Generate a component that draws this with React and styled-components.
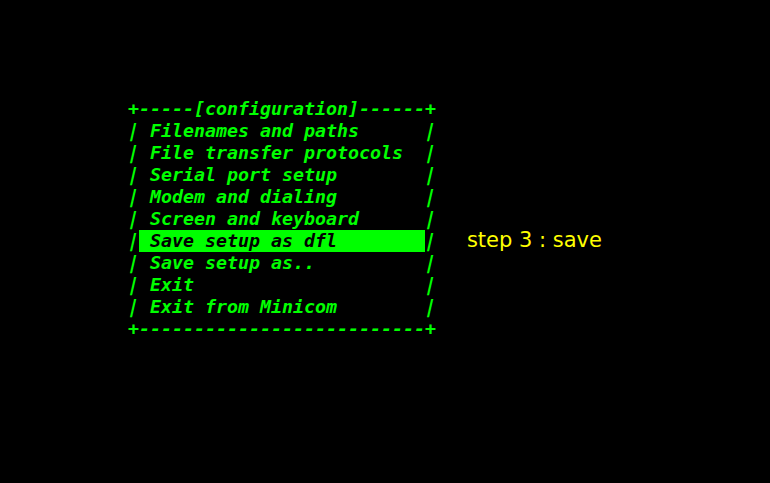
import React from 'react';
import styled, { createGlobalStyle } from 'styled-components';

const Global = createGlobalStyle`
  html, body {
    margin: 0;
    padding: 0;
    background: #000;
  }
  body {
    width: 770px;
    height: 483px;
    overflow: hidden;
  }
`;

const Screen = styled.div`
  width: 770px;
  height: 483px;
  background: #000;
  box-sizing: border-box;
  padding: 98px 0 0 128px;
  display: flex;
  align-items: flex-start;
`;

const Menu = styled.div`
  display: flex;
  flex-direction: column;
  font-family: "DejaVu Sans Mono", "Liberation Mono", monospace;
  font-weight: bold;
  font-style: oblique;
  font-size: 18.27px;
  color: #00ff00;
`;

const Line = styled.div`
  height: 22px;
  line-height: 22px;
  white-space: pre;
  display: flex;
`;

// the border bar leans like the rest of the oblique text
const Bar = styled.span`
  display: inline-block;
  transform: skewX(-13deg);
`;

const Cell = styled.span`
  background: ${p => (p.$active ? '#00ff00' : 'transparent')};
  color: ${p => (p.$active ? '#000' : '#00ff00')};
  white-space: pre;
`;

const Note = styled.div`
  margin: 131px 0 0 31px;
  height: 22px;
  line-height: 22px;
  font-family: "DejaVu Sans", "Liberation Sans", sans-serif;
  font-size: 21px;
  color: #ffff00;
  white-space: pre;
`;

const WIDTH = 26;

const items = [
  'Filenames and paths',
  'File transfer protocols',
  'Serial port setup',
  'Modem and dialing',
  'Screen and keyboard',
  'Save setup as dfl',
  'Save setup as..',
  'Exit',
  'Exit from Minicom',
];

function App() {
  const active = 5;
  return (
    <>
      <Global />
      <Screen>
        <Menu>
          <Line>+-----[configuration]------+</Line>
          {items.map((item, i) => (
            <Line key={item}>
              <Bar>|</Bar>
              <Cell $active={i === active}>{(' ' + item).padEnd(WIDTH, ' ')}</Cell>
              <Bar>|</Bar>
            </Line>
          ))}
          <Line>{'+' + '-'.repeat(WIDTH) + '+'}</Line>
        </Menu>
        <Note>step 3 : save</Note>
      </Screen>
    </>
  );
}

export default App;
